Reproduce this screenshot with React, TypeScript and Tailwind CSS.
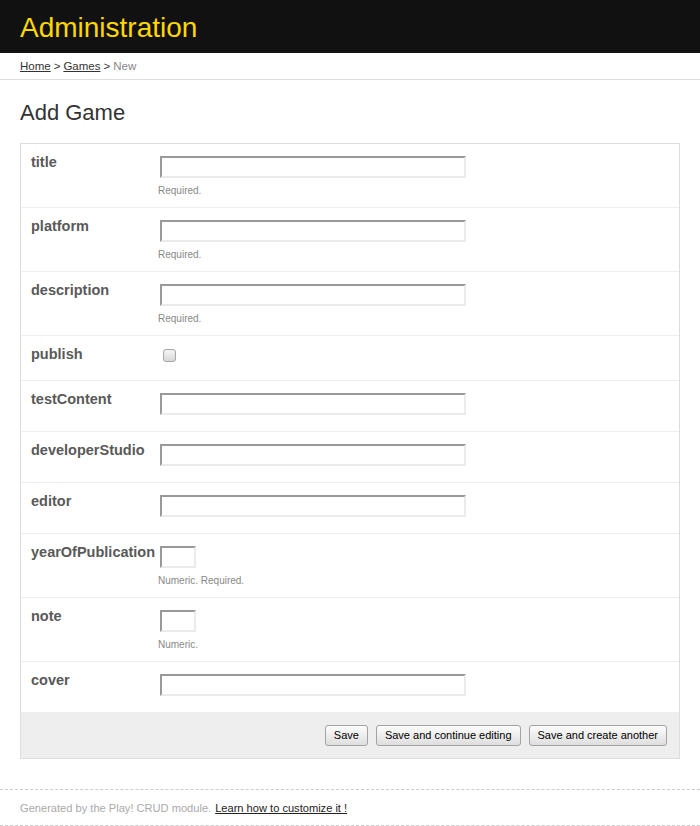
type Field = {
  name: string;
  kind: "text" | "number" | "checkbox";
  hint?: string;
};

const fields: Field[] = [
  { name: "title", kind: "text", hint: "Required." },
  { name: "platform", kind: "text", hint: "Required." },
  { name: "description", kind: "text", hint: "Required." },
  { name: "publish", kind: "checkbox" },
  { name: "testContent", kind: "text" },
  { name: "developerStudio", kind: "text" },
  { name: "editor", kind: "text" },
  { name: "yearOfPublication", kind: "number", hint: "Numeric. Required." },
  { name: "note", kind: "number", hint: "Numeric." },
  { name: "cover", kind: "text" },
];

const inputCls =
  "ml-[2px] mt-[3px] block h-[22px] border-2 border-t-[#999] border-l-[#999] border-r-[#ebebeb] border-b-[#ebebeb] bg-white outline-none";

const buttonCls =
  "h-[21px] px-[8px] text-[11px] leading-[19px] text-black border border-[#a3a3a3] rounded-[3px] bg-gradient-to-b from-[#fdfdfd] to-[#dedede]";

function FieldRow({ f }: { f: Field }) {
  const height = f.hint ? "h-[64px]" : f.kind === "checkbox" ? "h-[45px]" : "h-[51px]";
  return (
    <div className={`flex border-b border-[#eee] pt-[9px] pl-[10px] ${height}`}>
      <label className="mt-[1px] w-[127px] shrink-0 text-[14.5px] leading-[17px] font-bold text-[#595959] whitespace-nowrap">
        {f.name}
      </label>
      <div className="flex-1">
        {f.kind === "checkbox" ? (
          <input
            type="checkbox"
            className="ml-[5px] mt-[4px] block w-[13px] h-[13px] appearance-none rounded-[3px] border border-[#a5a5a5] bg-gradient-to-b from-[#f4f4f4] to-[#d8d8d8]"
          />
        ) : (
          <input
            type="text"
            className={`${inputCls} ${f.kind === "number" ? "w-[36px]" : "w-[306px]"}`}
          />
        )}
        {f.hint && (
          <div className="mt-[7px] text-[10px] leading-[12px] text-[#888]">{f.hint}</div>
        )}
      </div>
    </div>
  );
}

export default function App() {
  return (
    <div
      className="w-[700px] bg-white text-[#333]"
      style={{ fontFamily: '"Liberation Sans", Arial, sans-serif' }}
    >
      {/* Header */}
      <header className="h-[53px] bg-[#111] px-[20px] flex items-center">
        <h1 className="text-[28px] leading-[32px] text-[#ffd700] mt-[2px]">Administration</h1>
      </header>

      {/* Breadcrumb */}
      <div className="h-[27px] border-b border-[#ddd] px-[20px] pt-[1px] flex items-center text-[11.5px] leading-[13px]">
        <a href="#" className="underline text-[#333]">Home</a>
        <span className="mx-[3px]">&gt;</span>
        <a href="#" className="underline text-[#333]">Games</a>
        <span className="mx-[3px]">&gt;</span>
        <span className="text-[#888]">New</span>
      </div>

      <div className="px-[20px]">
        <h2 className="mt-[20px] mb-[17px] text-[22px] leading-[26px] font-normal text-[#333]">
          Add Game
        </h2>

        <form className="border border-[#ddd]" onSubmit={(e) => e.preventDefault()}>
          {fields.map((f) => (
            <FieldRow key={f.name} f={f} />
          ))}
          <div className="h-[45px] bg-[#eee] flex items-center justify-end gap-[8px] pr-[12px]">
            <button className={buttonCls}>Save</button>
            <button className={buttonCls}>Save and continue editing</button>
            <button className={buttonCls}>Save and create another</button>
          </div>
        </form>
      </div>

      {/* Footer */}
      <footer className="mt-[30px] h-[37px] border-y border-dashed border-[#ccc] px-[20px] pt-[1px] flex items-center text-[11.1px] leading-[13px]">
        <span className="text-[#aaa]">Generated by the Play! CRUD module.</span>
        <a href="#" className="ml-[4px] underline text-[#222]">Learn how to customize it !</a>
      </footer>
    </div>
  );
}
